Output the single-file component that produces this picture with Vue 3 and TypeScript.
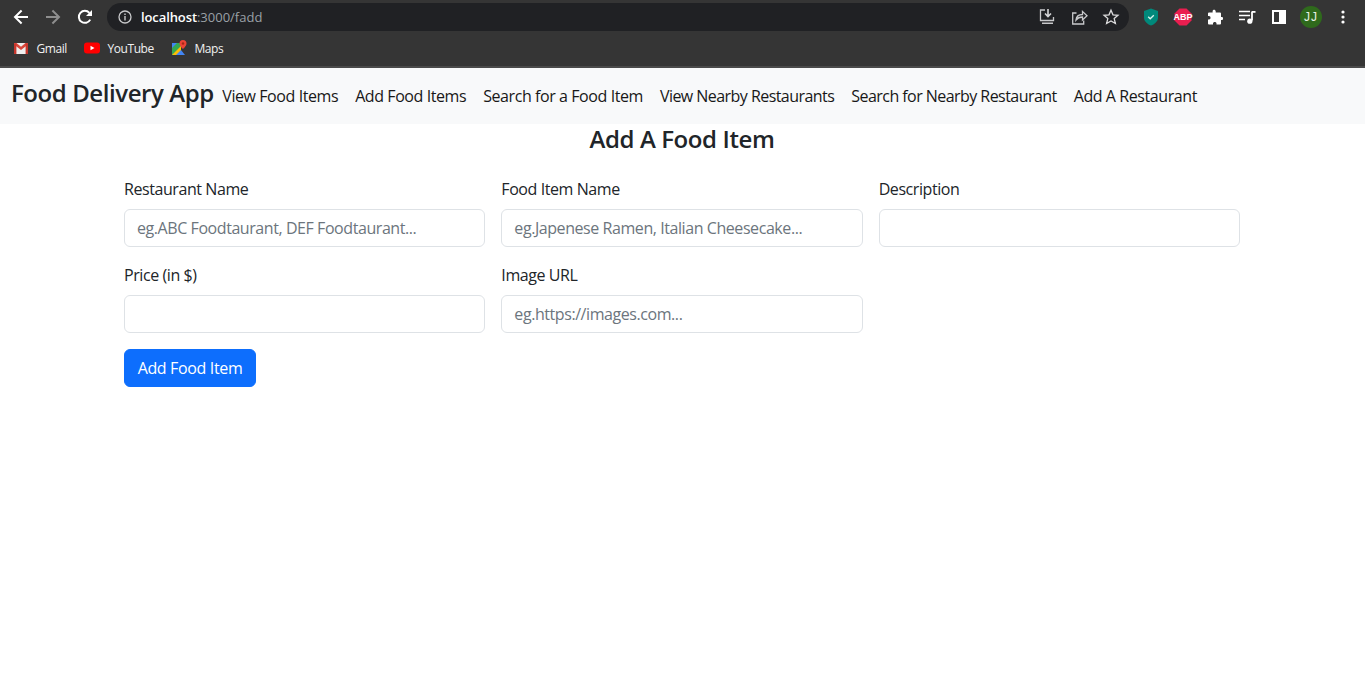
<template>
  <div class="page">
    <!-- browser chrome -->
    <header class="chrome">
      <div class="toolbar">
        <button class="tool">
          <svg width="16" height="16" viewBox="0 0 16 16"><path d="M15 8H2.500M8.600 1.500 2 8l6.600 6.500" fill="none" stroke="#fff" stroke-width="2" /></svg>
        </button>
        <button class="tool">
          <svg width="16" height="16" viewBox="0 0 16 16"><path d="M1 8h12.500M7.400 1.500 14 8l-6.600 6.500" fill="none" stroke="#8e8e8e" stroke-width="2" /></svg>
        </button>
        <button class="tool">
          <svg width="16" height="16" viewBox="0 0 16 16"><path d="M13.200 10.600A6 6 0 1 1 12.400 3.900" fill="none" stroke="#fff" stroke-width="2" /><path d="M15 1v6H9z" fill="#fff" /></svg>
        </button>
        <div class="omnibox">
          <svg class="info" width="14" height="14" viewBox="0 0 14 14"><circle cx="7" cy="7" r="6" fill="none" stroke="#c8c9cb" stroke-width="1.300" /><path d="M7 6v4.400M7 3.400v1.500" stroke="#c8c9cb" stroke-width="1.400" /></svg>
          <span class="url"><b>localhost</b>:3000/fadd</span>
          <div class="omni-actions">
            <svg width="18" height="18" viewBox="0 0 18 18"><path d="M7 2H2.500v10.500h13V9" fill="none" stroke="#c8c9cb" stroke-width="1.300" /><path d="M10 1v7M7 5.500l3 3 3-3" fill="none" stroke="#d5d6d8" stroke-width="1.600" /><path d="M4 14.500h11V16H4z" fill="#c8c9cb" /></svg>
            <svg width="18" height="18" viewBox="0 0 18 18"><path d="M6.500 5H2.700v11h11v-3.500" fill="none" stroke="#c8c9cb" stroke-width="1.300" /><path d="M6 12c.3-3.400 2.700-5.500 6.500-5.500V3.400L17 7.700l-4.500 4.200V9C9.800 9 7.500 10 6 12z" fill="none" stroke="#c8c9cb" stroke-width="1.300" /></svg>
            <svg width="18" height="18" viewBox="0 0 18 18"><path d="m9 2.200 2 4.600 5 .5-3.800 3.300 1.200 4.900L9 13l-4.400 2.500 1.200-4.900L2 7.300l5-.5z" fill="none" stroke="#dcdcdd" stroke-width="1.300" /></svg>
          </div>
        </div>
        <div class="extensions">
          <span class="ext">
            <svg width="16" height="18" viewBox="0 0 16 18"><path d="M8 .5 15 3v6.500c0 3.800-3 6.500-7 8-4-1.500-7-4.200-7-8V3z" fill="#00897b" /><path d="m5.200 8.800 2 2 3.600-3.600" fill="none" stroke="#d7f5ef" stroke-width="1.300" /></svg>
          </span>
          <span class="ext">
            <svg width="18" height="18" viewBox="0 0 18 18"><path d="M5.500.5h7l5 5v7l-5 5h-7l-5-5v-7z" fill="#ea1e50" /></svg>
            <span class="abp">ABP</span>
          </span>
          <span class="ext">
            <svg width="16" height="16" viewBox="0 0 16 16"><path d="M6 1.200c1-.9 2.600-.3 2.700 1.100V3.500H13a1 1 0 0 1 1 1V8h1c1.500 0 1.500 3 0 3h-1v3.500a1 1 0 0 1-1 1H9.500v-1c0-2-3.500-2-3.500 0v1H2a1 1 0 0 1-1-1V10.500h1c2 0 2-3.500 0-3.500H1V4.500a1 1 0 0 1 1-1h3.600V2.300c0-.4.100-.8.400-1.100z" fill="#fff" /></svg>
          </span>
          <span class="ext">
            <svg width="18" height="16" viewBox="0 0 18 16"><path d="M1 2.500h11M1 6.500h11M1 10.500h6" stroke="#fff" stroke-width="1.600" /><path d="M14 2.500v9" stroke="#fff" stroke-width="1.800" /><path d="M14 2h3.500v1.800H14z" fill="#fff" /><circle cx="11.800" cy="12.200" r="2.600" fill="#fff" /></svg>
          </span>
          <span class="ext">
            <svg width="14" height="14" viewBox="0 0 14 14"><path d="M0 0h14v14H0z" fill="#fff" /><path d="M2 2h5v10H2z" fill="#353535" /></svg>
          </span>
          <span class="ext"><span class="avatar">JJ</span></span>
          <span class="ext">
            <svg width="4" height="14" viewBox="0 0 4 14"><circle cx="2" cy="2" r="1.600" fill="#fff" /><circle cx="2" cy="7" r="1.600" fill="#fff" /><circle cx="2" cy="12" r="1.600" fill="#fff" /></svg>
          </span>
        </div>
      </div>

      <div class="bookmarks">
        <a class="bookmark">
          <svg width="16" height="16" viewBox="0 0 16 16"><path d="M1 3h14v11H1z" fill="#eeeeee" /><path d="M1 3h2.500L8 6.800 12.500 3H15v1.500L8 10 1 4.500z" fill="#d9473b" /><path d="M1 3.500h2.400V14H1zM12.600 3.500H15V14h-2.400z" fill="#c5362c" /></svg>
          Gmail
        </a>
        <a class="bookmark">
          <svg width="16" height="16" viewBox="0 0 16 16"><rect y="2.500" width="16" height="11" rx="3" fill="#f00" /><path d="m6.500 5.700 4 2.300-4 2.300z" fill="#fff" /></svg>
          YouTube
        </a>
        <a class="bookmark">
          <svg width="16" height="16" viewBox="0 0 16 16"><path d="M1 3h9v12H1z" fill="#34a853" /><path d="M1 15 10 6v9z" fill="#fbbc04" /><path d="M1 3h5L1 8z" fill="#4285f4" /><path d="M5 15l5-5 4 5z" fill="#4285f4" /><path d="M12 0a3.500 3.500 0 0 1 3.500 3.500C15.500 6 12 9 12 9S8.500 6 8.500 3.500A3.500 3.500 0 0 1 12 0z" fill="#ea4335" /><circle cx="12" cy="3.500" r="1.200" fill="#a52714" /></svg>
          Maps
        </a>
      </div>
    </header>

    <!-- app navbar -->
    <nav class="navbar">
      <a class="brand">Food Delivery App</a>
      <a
        v-for="link in links"
        :key="link.label"
        class="nav-link"
        :class="{ tight: link.tight }"
      >
        {{ link.label }}
      </a>
    </nav>

    <main class="container">
      <h3 class="title">Add A Food Item</h3>
      <form class="form" @submit.prevent>
        <div v-for="field in fields" :key="field.label" class="field">
          <label class="label">{{ field.label }}</label>
          <input class="input" type="text" :placeholder="field.placeholder" />
        </div>
        <div class="actions">
          <button class="submit" type="submit">Add Food Item</button>
        </div>
      </form>
    </main>
  </div>
</template>

<script setup lang="ts">
// long links run a little wide in the substitute font
const links = [
  { label: 'View Food Items', tight: false },
  { label: 'Add Food Items', tight: false },
  { label: 'Search for a Food Item', tight: false },
  { label: 'View Nearby Restaurants', tight: true },
  { label: 'Search for Nearby Restaurant', tight: true },
  { label: 'Add A Restaurant', tight: false },
]

const fields = [
  { label: 'Restaurant Name', placeholder: 'eg.ABC Foodtaurant, DEF Foodtaurant...' },
  { label: 'Food Item Name', placeholder: 'eg.Japenese Ramen, Italian Cheesecake...' },
  { label: 'Description', placeholder: '' },
  { label: 'Price (in $)', placeholder: '' },
  { label: 'Image URL', placeholder: 'eg.https://images.com...' },
]
</script>

<style>
html,
body {
  margin: 0;
  background: #fff;
}
</style>

<style scoped>
.page {
  min-height: 693px;
  background: #fff;
  color: #212529;
  font-family: 'Open Sans', 'Noto Sans', sans-serif;
  font-size: 16px;
  letter-spacing: -0.35px;
}

.chrome {
  height: 68px;
  box-sizing: border-box;
  background: #353535;
  border-bottom: 2px solid #4a4a4a;
  font-family: 'Open Sans', sans-serif;
  letter-spacing: 0;
}

.toolbar {
  height: 34px;
  display: flex;
  align-items: center;
  padding-left: 5px;
}

.tool {
  width: 32px;
  height: 32px;
  display: flex;
  align-items: center;
  justify-content: center;
  padding: 0;
  border: 0;
  background: none;
}

.omnibox {
  width: 1022px;
  height: 28px;
  margin-left: 6px;
  padding-left: 11px;
  box-sizing: border-box;
  display: flex;
  align-items: center;
  border-radius: 14px;
  background: #202124;
}

.info {
  margin-right: 9px;
}

.url {
  font-size: 13px;
  color: #9aa0a6;
}

.url b {
  font-weight: 600;
  letter-spacing: -0.1px;
  color: #fff;
}

.omni-actions {
  margin-left: auto;
  margin-right: 9px;
  display: flex;
  gap: 14px;
}

.extensions {
  display: flex;
  margin-left: 6px;
}

.ext {
  position: relative;
  width: 32px;
  height: 32px;
  display: flex;
  align-items: center;
  justify-content: center;
}

.abp {
  position: absolute;
  left: 0;
  right: 0;
  text-align: center;
  font-family: 'Liberation Sans', sans-serif;
  font-size: 9px;
  font-weight: 700;
  color: #fff;
}

.avatar {
  width: 22px;
  height: 22px;
  border-radius: 50%;
  display: flex;
  align-items: center;
  justify-content: center;
  background: #2f6a1c;
  color: #e8f0e4;
  font-family: 'Liberation Sans', sans-serif;
  font-size: 12px;
  letter-spacing: 1px;
}

.bookmarks {
  height: 28px;
  display: flex;
  align-items: center;
  gap: 17px;
  padding-left: 13px;
}

.bookmark {
  display: flex;
  align-items: center;
  gap: 7.5px;
  font-size: 12px;
  letter-spacing: -0.42px;
  color: #f1f1f1;
}

.navbar {
  height: 56px;
  box-sizing: border-box;
  display: flex;
  align-items: center;
  padding: 0 12px 6px 11px;
  background: #f8f9fa;
}

.brand {
  font-size: 24px;
  font-weight: 600;
  line-height: 36px;
  letter-spacing: -0.42px;
  color: #212529;
}

.nav-link {
  padding: 8px 8.5px;
  margin-top: 5px;
  line-height: 24px;
  letter-spacing: -0.42px;
  color: #000;
  opacity: 0.9;
}

.nav-link.tight {
  letter-spacing: -0.55px;
}

.container {
  width: 1116px;
  margin-left: 124px;
}

.title {
  margin: 0;
  text-align: center;
  font-size: 24px;
  font-weight: 600;
  line-height: 29px;
  letter-spacing: -0.4px;
}

.form {
  display: grid;
  grid-template-columns: repeat(3, 1fr);
  gap: 16px;
  margin-top: 24px;
}

.field {
  min-width: 0;
}

.label {
  display: block;
  margin-bottom: 8px;
  line-height: 24px;
  letter-spacing: -0.42px;
}

.input {
  display: block;
  width: 100%;
  height: 38px;
  box-sizing: border-box;
  padding: 6px 12px;
  border: 1px solid #dee2e6;
  border-radius: 6px;
  background: #fff;
  color: #212529;
  font: inherit;
  letter-spacing: -0.43px;
}

.input::placeholder {
  color: #6c757d;
  opacity: 1;
}

.actions {
  grid-column: 1 / -1;
}

.submit {
  width: 132px;
  height: 38px;
  padding: 0;
  border: 1px solid #0d6efd;
  border-radius: 6px;
  background: #0d6efd;
  color: #fff;
  font: inherit;
  letter-spacing: inherit;
}
</style>
